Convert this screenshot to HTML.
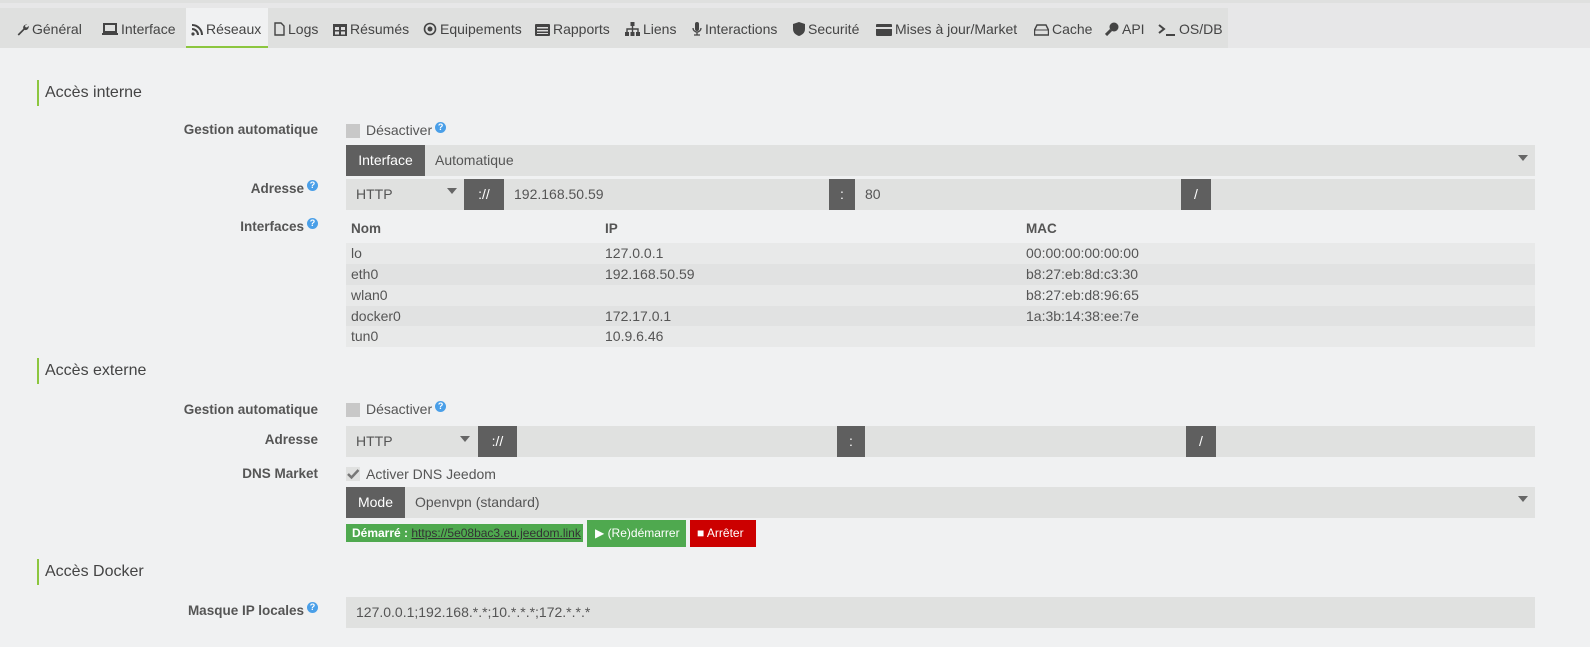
<!DOCTYPE html>
<html><head><meta charset="utf-8"><style>
*{box-sizing:border-box;margin:0;padding:0}
body{width:1590px;height:647px;background:#f0f1f2;font-family:"Liberation Sans",sans-serif;font-size:14px;color:#555;position:relative;overflow:hidden}
.a{position:absolute;white-space:nowrap}
.top{left:0;top:0;width:1590px;height:3px;background:#dfe0df}
.bar{left:0;top:3px;width:1590px;height:45px;background:#e7e7e8}
.tabs{left:0;top:8px;width:1228px;height:40px;background:#dfe0df}
.tab{top:8px;height:40px;line-height:42px;font-size:14px;color:#444}
.tab svg{vertical-align:-2px;margin-right:3px}
.act{background:#f0f1f2;border-bottom:2px solid #8cc63f;padding:0 5px}
.h{font-size:16px;color:#444;border-left:2px solid #8cc63f;padding-left:6px;height:26px;line-height:26px}
.lab{font-weight:bold;font-size:13.5px;color:#555;text-align:right}
.q{display:inline-block;width:11px;height:11px;border-radius:50%;background:#4a9fe8;color:#fff;font-size:9px;line-height:11px;text-align:center;font-weight:bold;vertical-align:5px;margin-left:3px}
.in{background:#e0e1e0;height:31px;line-height:31px;padding-left:10px;color:#555}
.dk{background:#5f5f5f;color:#fff;height:31px;line-height:31px;text-align:center}
.car{width:0;height:0;border-left:5px solid transparent;border-right:5px solid transparent;border-top:6px solid #666}
.cb{width:14px;height:14px;background:#c8c8c8}
.row{left:346px;width:1189px;height:21px;line-height:21px}
.row span{position:absolute}
</style></head><body>
<div class="a top"></div><div class="a bar"></div><div class="a tabs"></div>
<div class="a tab" style="left:16px"><svg width="13" height="13" viewBox="0 0 16 16"><path d="M14 2a4 4 0 0 0-5 5L2 14l1.5 1.5 7-7a4 4 0 0 0 5-5l-2 2-2-.5-.5-2z" fill="#444"/></svg>Général</div>
<div class="a tab" style="left:102px"><svg width="16" height="13" viewBox="0 0 16 13"><rect x="2" y="1" width="12" height="8" fill="none" stroke="#444" stroke-width="2"/><rect x="0" y="10" width="16" height="2" fill="#444"/></svg>Interface</div>
<div class="a tab act" style="left:186px;width:82px"><svg width="12" height="12" viewBox="0 0 12 12"><circle cx="2" cy="10" r="1.6" fill="#444"/><path d="M1 5a6 6 0 0 1 6 6M1 1a10 10 0 0 1 10 10" fill="none" stroke="#444" stroke-width="2"/></svg>Réseaux</div>
<div class="a tab" style="left:274px"><svg width="11" height="14" viewBox="0 0 11 14"><path d="M1 1h6l3 3v9H1z" fill="none" stroke="#444" stroke-width="1.4"/></svg>Logs</div>
<div class="a tab" style="left:333px"><svg width="14" height="12" viewBox="0 0 14 12"><rect width="14" height="12" fill="#444"/><rect x="2" y="3" width="4" height="3" fill="#ddd"/><rect x="8" y="3" width="4" height="3" fill="#ddd"/><rect x="2" y="7.5" width="4" height="3" fill="#ddd"/><rect x="8" y="7.5" width="4" height="3" fill="#ddd"/></svg>Résumés</div>
<div class="a tab" style="left:423px"><svg width="14" height="14" viewBox="0 0 14 14"><circle cx="7" cy="7" r="5.5" fill="none" stroke="#444" stroke-width="1.6"/><circle cx="7" cy="7" r="2.5" fill="#444"/></svg>Equipements</div>
<div class="a tab" style="left:535px"><svg width="15" height="12" viewBox="0 0 15 12"><rect width="15" height="12" rx="1" fill="#444"/><rect x="2" y="3" width="11" height="1.5" fill="#ddd"/><rect x="2" y="6" width="11" height="1.5" fill="#ddd"/><rect x="2" y="9" width="11" height="1" fill="#ddd"/></svg>Rapports</div>
<div class="a tab" style="left:625px"><svg width="15" height="14" viewBox="0 0 15 14"><rect x="5.5" y="0" width="4" height="4" fill="#444"/><path d="M7.5 4v3M2 10V7h11v3M7.5 7v3" stroke="#444" fill="none" stroke-width="1.4"/><rect x="0" y="10" width="4" height="4" fill="#444"/><rect x="5.5" y="10" width="4" height="4" fill="#444"/><rect x="11" y="10" width="4" height="4" fill="#444"/></svg>Liens</div>
<div class="a tab" style="left:692px"><svg width="10" height="14" viewBox="0 0 10 14"><rect x="3" y="0" width="4" height="9" rx="2" fill="#444"/><path d="M1 6a4 4 0 0 0 8 0M5 10v3M2 13h6" stroke="#444" fill="none" stroke-width="1.3"/></svg>Interactions</div>
<div class="a tab" style="left:793px"><svg width="12" height="14" viewBox="0 0 12 14"><path d="M6 0L0 2v5c0 4 3 6 6 7 3-1 6-3 6-7V2z" fill="#444"/></svg>Securité</div>
<div class="a tab" style="left:876px"><svg width="16" height="12" viewBox="0 0 16 12"><rect width="16" height="12" rx="1" fill="#444"/><rect x="0" y="3" width="16" height="2" fill="#ddd"/></svg>Mises à jour/Market</div>
<div class="a tab" style="left:1034px"><svg width="15" height="12" viewBox="0 0 15 12"><path d="M3 1h9l2.5 5v5H.5V6z" fill="none" stroke="#444" stroke-width="1.4"/><path d="M1 6h13" stroke="#444"/></svg>Cache</div>
<div class="a tab" style="left:1105px"><svg width="14" height="14" viewBox="0 0 14 14"><circle cx="9" cy="5" r="4.5" fill="#444"/><path d="M6 8l-5 5" stroke="#444" stroke-width="3"/></svg>API</div>
<div class="a tab" style="left:1158px"><svg width="18" height="12" viewBox="0 0 18 12"><path d="M1 1l5 4-5 4" stroke="#444" fill="none" stroke-width="2"/><rect x="8" y="10" width="9" height="2" fill="#444"/></svg>OS/DB</div>

<div class="a h" style="left:37px;top:80px">Accès interne</div>
<div class="a lab" style="right:1272px;top:122px">Gestion automatique</div>
<div class="a cb" style="left:346px;top:124px"></div>
<div class="a" style="left:366px;top:122px">Désactiver<span class="q">?</span></div>
<div class="a dk" style="left:346px;top:145px;width:79px;height:31px">Interface</div>
<div class="a in" style="left:425px;top:145px;width:1110px">Automatique</div>
<div class="a car" style="left:1518px;top:155px"></div>
<div class="a lab" style="right:1272px;top:180px">Adresse<span class="q">?</span></div>
<div class="a in" style="left:346px;top:179px;width:118px">HTTP</div><div class="a car" style="left:447px;top:188px"></div>
<div class="a dk" style="left:464px;top:179px;width:40px">://</div>
<div class="a in" style="left:504px;top:179px;width:325px">192.168.50.59</div>
<div class="a dk" style="left:829px;top:179px;width:26px">:</div>
<div class="a in" style="left:855px;top:179px;width:326px">80</div>
<div class="a dk" style="left:1181px;top:179px;width:30px">/</div>
<div class="a in" style="left:1211px;top:179px;width:324px"></div>
<div class="a lab" style="right:1272px;top:218px">Interfaces<span class="q">?</span></div>
<div class="a row" style="top:218px;font-weight:bold;font-size:13.5px"><span style="left:5px">Nom</span><span style="left:259px">IP</span><span style="left:680px">MAC</span></div>
<div class="a row" style="top:243px;background:#e8e9e9"><span style="left:5px">lo</span><span style="left:259px">127.0.0.1</span><span style="left:680px">00:00:00:00:00:00</span></div>
<div class="a row" style="top:264px;background:#e1e2e2"><span style="left:5px">eth0</span><span style="left:259px">192.168.50.59</span><span style="left:680px">b8:27:eb:8d:c3:30</span></div>
<div class="a row" style="top:285px;background:#e8e9e9"><span style="left:5px">wlan0</span><span style="left:680px">b8:27:eb:d8:96:65</span></div>
<div class="a row" style="top:306px;background:#e1e2e2"><span style="left:5px">docker0</span><span style="left:259px">172.17.0.1</span><span style="left:680px">1a:3b:14:38:ee:7e</span></div>
<div class="a row" style="top:326px;background:#e8e9e9"><span style="left:5px">tun0</span><span style="left:259px">10.9.6.46</span></div>

<div class="a h" style="left:37px;top:358px">Accès externe</div>
<div class="a lab" style="right:1272px;top:402px">Gestion automatique</div>
<div class="a cb" style="left:346px;top:403px"></div>
<div class="a" style="left:366px;top:401px">Désactiver<span class="q">?</span></div>
<div class="a lab" style="right:1272px;top:432px">Adresse</div>
<div class="a in" style="left:346px;top:426px;width:132px">HTTP</div><div class="a car" style="left:460px;top:436px"></div>
<div class="a dk" style="left:478px;top:426px;width:39px">://</div>
<div class="a in" style="left:517px;top:426px;width:320px"></div>
<div class="a dk" style="left:837px;top:426px;width:28px">:</div>
<div class="a in" style="left:865px;top:426px;width:321px"></div>
<div class="a dk" style="left:1186px;top:426px;width:30px">/</div>
<div class="a in" style="left:1216px;top:426px;width:319px"></div>
<div class="a lab" style="right:1272px;top:466px">DNS Market</div>
<div class="a cb" style="left:346px;top:467px;background:#e0e1e0"><svg width="14" height="14" viewBox="0 0 14 14"><path d="M2 7l3.5 3.5L12.5 3" stroke="#777" stroke-width="2.5" fill="none"/></svg></div>
<div class="a" style="left:366px;top:466px">Activer DNS Jeedom</div>
<div class="a dk" style="left:346px;top:487px;width:59px">Mode</div>
<div class="a in" style="left:405px;top:487px;width:1130px">Openvpn (standard)</div>
<div class="a car" style="left:1518px;top:496px"></div>
<div class="a" style="left:346px;top:524px;width:237px;height:18px;background:#4fa94f;color:#fff;font-size:12px;font-weight:bold;line-height:18px;padding-left:6px">Démarré : <span style="color:#333;font-weight:normal;text-decoration:underline">https://5e08bac3.eu.jeedom.link</span></div>
<div class="a" style="left:587px;top:520px;width:99px;height:27px;background:#4fa94f;color:#fff;font-size:12px;line-height:27px;padding-left:8px">▶ (Re)démarrer</div>
<div class="a" style="left:690px;top:520px;width:66px;height:27px;background:#c00;color:#fff;font-size:12px;line-height:27px;padding-left:7px">■ Arrêter</div>

<div class="a h" style="left:37px;top:559px">Accès Docker</div>
<div class="a lab" style="right:1272px;top:602px">Masque IP locales<span class="q">?</span></div>
<div class="a in" style="left:346px;top:597px;width:1189px">127.0.0.1;192.168.*.*;10.*.*.*;172.*.*.*</div>
</body></html>
